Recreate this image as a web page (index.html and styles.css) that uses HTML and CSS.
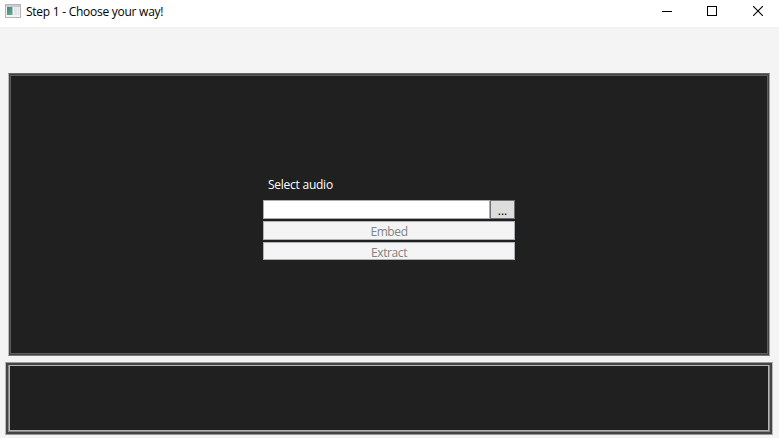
FILE: index.html
```html
<!DOCTYPE html>
<html lang="en">
<head>
<meta charset="utf-8">
<title>Step 1 - Choose your way!</title>
<link rel="stylesheet" href="styles.css">
</head>
<body>
<header class="titlebar">
  <svg class="app-icon" width="16" height="14" viewBox="0 0 16 14" shape-rendering="crispEdges">
    <defs>
      <linearGradient id="pane" x1="0" y1="0" x2="0.6" y2="1"><stop offset="0" stop-color="#477a9f"/><stop offset="1" stop-color="#5eaa7c"/></linearGradient>
    </defs>
    <rect x="0.5" y="0.5" width="15" height="13" fill="#f3f3f3" stroke="#b5b5b8"/>
    <rect x="1" y="1" width="14" height="2" fill="#c9cbd0"/>
    <rect x="2" y="3" width="5" height="8" fill="url(#pane)"/>
    <rect x="7" y="3" width="1" height="8" fill="#a9cbbb"/>
    <rect x="9" y="3" width="3" height="8" fill="#e3e4e8"/>
    <rect x="13" y="3" width="1" height="8" fill="#dcdde0"/>
  </svg>
  <h1 class="title">Step 1 - Choose your way!</h1>
  <div class="controls">
    <svg class="minimize" width="10" height="10" viewBox="0 0 10 10" shape-rendering="crispEdges"><path d="M0 5.5H10" stroke="#000"/></svg>
    <svg width="10" height="10" viewBox="0 0 10 10" shape-rendering="crispEdges"><path d="M.5 .5H9.5V9.5H.5Z" fill="none" stroke="#000"/></svg>
    <svg width="10" height="10" viewBox="0 0 10 10"><path d="M0 0L10 10M10 0L0 10" stroke="#000" stroke-width="1.1"/></svg>
  </div>
</header>
<main class="panel main-panel">
  <form class="form">
    <label class="label" for="audio">Select audio</label>
    <div class="file-row">
      <input class="field" id="audio" type="text">
      <button class="browse" type="button">...</button>
    </div>
    <button class="action embed" type="button" disabled>Embed</button>
    <button class="action extract" type="button" disabled>Extract</button>
  </form>
</main>
<footer class="panel status-panel"></footer>
</body>
</html>
```

FILE: styles.css
```css
* { box-sizing: border-box; }

body {
  margin: 0;
  height: 438px;
  overflow: hidden;
  background: #f4f4f4;
  font: 12px/16px "Open Sans", "Noto Sans", sans-serif;
}

.titlebar {
  display: flex;
  height: 27px;
  padding-left: 5px;
  background: #fff;
}

.app-icon { margin-top: 4px; }

.title {
  margin: 4px 0 0 5px;
  font-size: 12px;
  font-weight: 400;
  letter-spacing: -0.26px;
  color: #000;
}

.controls {
  display: flex;
  gap: 36px;
  margin: 6px 16px 0 auto;
}

.minimize { margin-right: -1px; }

.panel { background: #202020; }

.main-panel {
  width: 762px;
  height: 283px;
  margin: 46px 0 0 8px;
  border: 1px solid;
  border-color: #666 #aaa #777 #bbb;
  box-shadow: inset 0 0 0 1px #444, inset 0 0 0 2px #5c5c5c;
  padding: 103px 0 0 254px;
}

/* the inner line sits one pixel closer to the frame along the top */
.status-panel {
  width: 768px;
  height: 73px;
  margin: 6px 0 0 5px;
  border: 1px solid;
  border-color: #999 #bbb #999 #bbb;
  box-shadow:
    inset 0 0 0 2px #444,
    inset 1px -1px 0 2px #888,
    inset -1px -1px 0 2px #888,
    inset 0 0 0 3px #b5b5b5,
    inset 1px -1px 0 3px #b5b5b5,
    inset -1px -1px 0 3px #b5b5b5;
}

.form {
  display: flex;
  flex-direction: column;
  width: 252px;
}

.label {
  height: 23px;
  padding-left: 5px;
  letter-spacing: -0.25px;
  color: #fff;
}

.file-row { display: flex; height: 19px; }

.field {
  width: 227px;
  padding: 0 3px;
  border: 1px solid #abadb3;
  background: #fff;
  font: inherit;
}

.browse, .action {
  padding: 0;
  border: 1px solid #707070;
  background: #ddd;
  color: #000;
  font: inherit;
  line-height: 19px;
}

.browse { width: 25px; }

.action {
  height: 19px;
  margin-top: 2px;
  overflow: hidden;
  border-color: #adb2b5;
  background: #f4f4f4;
  color: #838383;
  letter-spacing: -0.4px;
}

.extract { height: 18px; }
```
